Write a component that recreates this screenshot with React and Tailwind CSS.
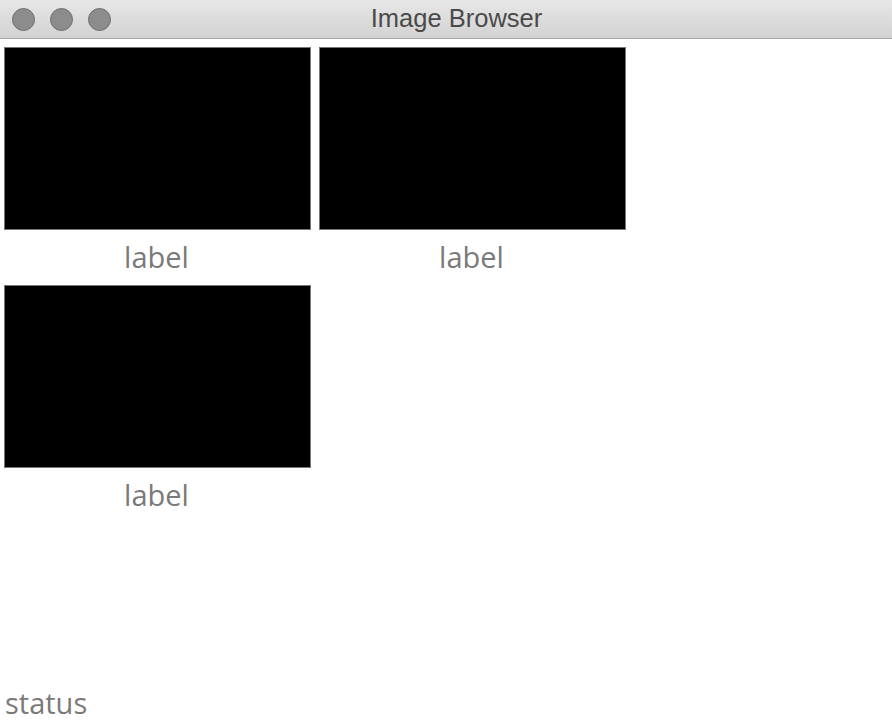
import React from 'react';

const images = ['label', 'label', 'label'];

const TitleBar = () => (
  <div className="relative flex items-center h-[39px] border-b border-[#a6a6a6] bg-gradient-to-b from-[#e7e7e7] to-[#d2d2d2]">
    <div className="flex items-center gap-[15px] pl-[12px]">
      <span className="block w-[23px] h-[23px] rounded-full bg-[#8c8c8c] border border-[#6f6f6f]" />
      <span className="block w-[23px] h-[23px] rounded-full bg-[#8c8c8c] border border-[#6f6f6f]" />
      <span className="block w-[23px] h-[23px] rounded-full bg-[#8c8c8c] border border-[#6f6f6f]" />
    </div>
    <div className="absolute inset-0 flex items-center justify-center pl-[21px] pb-[1px] pointer-events-none">
      <span className="text-[25.5px] text-[#4a4a4a] font-['Liberation_Sans',Arial,sans-serif]">Image Browser</span>
    </div>
  </div>
);

const Thumb = ({ label }) => (
  <div className="flex flex-col w-[307px]">
    <div className="h-[183px] bg-black border border-[#777]" />
    <div className="h-[55px] flex items-center justify-center text-[29px] text-[#7a7a7a] font-['Open_Sans',sans-serif] pb-[2px] pr-[2px]">
      {label}
    </div>
  </div>
);

const App = () => {
  return (
    <div className="w-[892px] h-[721px] bg-white flex flex-col overflow-hidden">
      <TitleBar />
      <div className="flex-1 pt-[8px] pl-[4px]">
        <div className="grid grid-cols-[307px_307px] gap-x-[8px]">
          {images.map((l, i) => (
            <Thumb key={i} label={l} />
          ))}
        </div>
      </div>
      <div className="pl-[5px] pb-[1px] h-[36px] leading-[36px] text-[29px] text-[#7a7a7a] font-['Open_Sans',sans-serif]">
        status
      </div>
    </div>
  );
};

export default App;
